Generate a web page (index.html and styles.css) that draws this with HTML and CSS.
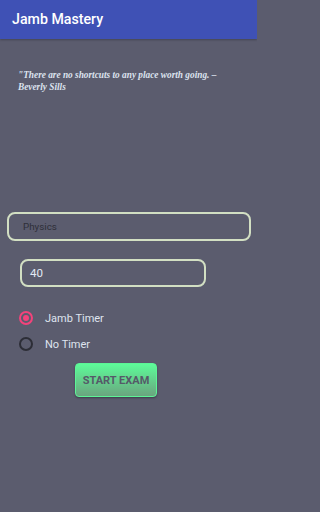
FILE: index.html
```html
<!DOCTYPE html>
<html>
<head>
<meta charset="utf-8">
<link rel="stylesheet" href="styles.css">
</head>
<body>
<header class="appbar"><span class="title">Jamb Mastery</span></header>
<main class="content">
  <p class="quote">"There are no shortcuts to any place worth going. – Beverly Sills</p>
  <div class="field field-subject"><span class="subject">Physics</span></div>
  <div class="field field-count"><span class="count">40</span></div>
  <div class="radios">
    <div class="radio-row"><span class="radio checked"></span><span class="radio-label">Jamb Timer</span></div>
    <div class="radio-row"><span class="radio"></span><span class="radio-label">No Timer</span></div>
  </div>
  <div class="btn-wrap"><button class="start">START EXAM</button></div>
</main>
</body>
</html>
```
FILE: styles.css
```css
html { background: #5b5c6e; }
html, body { margin: 0; padding: 0; }
body {
  width: 257px;
  height: 512px;
  background: #5b5c6e;
  font-family: Roboto, "Noto Sans", sans-serif;
  overflow: hidden;
}
.appbar {
  height: 39px;
  background: #3f51b5;
  display: flex;
  align-items: center;
  padding-left: 12px;
  box-shadow: 0 1px 2px rgba(0,0,0,0.25);
}
.title {
  color: #fff;
  font-size: 14.2px;
  font-weight: 500;
  margin-top: -1px;
}
.content {
  display: flex;
  flex-direction: column;
}
.quote {
  margin: 30px 14px 0 18px;
  font-family: "Liberation Serif", serif;
  font-style: italic;
  font-weight: bold;
  font-size: 9.3px;
  line-height: 12px;
  color: #dde3ee;
}
.field {
  box-sizing: border-box;
  border: 2px solid #d2dfc3;
  border-radius: 8px;
  display: flex;
  align-items: center;
}
.field-subject {
  margin: 119px 6px 0 7px;
  height: 29px;
  padding-left: 14px;
}
.subject {
  font-size: 9.8px;
  color: #2e2f38;
}
.field-count {
  margin: 18px 0 0 20px;
  width: 186px;
  height: 28px;
  padding-left: 8px;
}
.count {
  font-size: 11.5px;
  color: #e2e9f4;
}
.radios {
  margin: 24px 0 0 19px;
  display: flex;
  flex-direction: column;
  gap: 12px;
}
.radio-row {
  display: flex;
  align-items: center;
  height: 14px;
}
.radio {
  box-sizing: border-box;
  width: 14px;
  height: 14px;
  border-radius: 50%;
  border: 2px solid #2c2d36;
  display: flex;
  align-items: center;
  justify-content: center;
}
.radio.checked { border-color: #f3437b; }
.radio.checked::after {
  content: "";
  width: 6px;
  height: 6px;
  border-radius: 50%;
  background: #f3437b;
}
.radio-label {
  margin-left: 12px;
  font-size: 11px;
  color: #dfe4ef;
}
.btn-wrap {
  margin: 12px 0 0 75px;
  display: flex;
}
.start {
  width: 82px;
  height: 34px;
  border: 1.5px solid #5cf596;
  border-radius: 4px;
  background: linear-gradient(#5dfc99, #6aa57f);
  color: #555a68;
  font-family: Roboto, sans-serif;
  font-weight: bold;
  font-size: 11px;
  padding: 0;
  box-shadow: 0 1px 2px rgba(0,0,0,0.35);
}
```
